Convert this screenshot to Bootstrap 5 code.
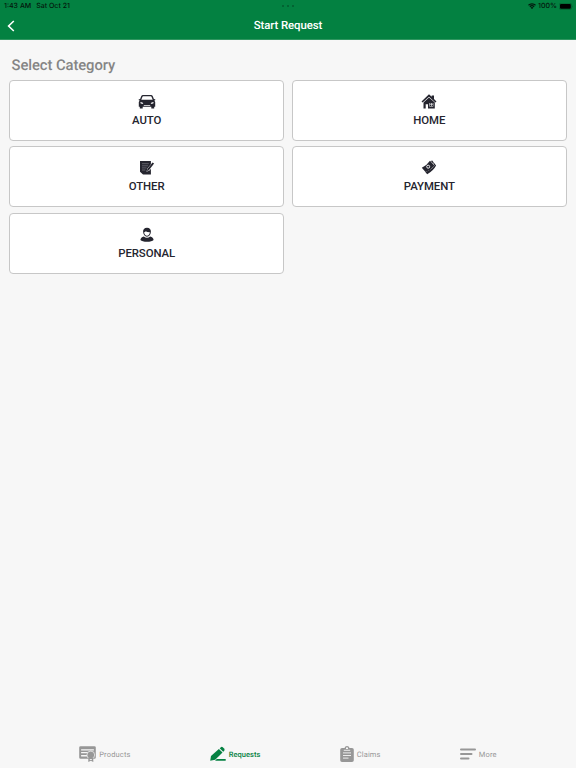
<!DOCTYPE html>
<html lang="en">

<head>
    <meta charset="utf-8" />
    <meta name="viewport" content="width=device-width, initial-scale=1" />
    <title>Start Request</title>

    <link rel="stylesheet" href="https://cdn.jsdelivr.net/npm/bootstrap@5.3.2/dist/css/bootstrap.min.css">
    <style>
        body {
            background-color: #f7f7f7;
            font-family: Roboto, sans-serif;
            color: #25252f;
            text-rendering: geometricPrecision;
        }

        .app-header {
            height: 40px;
            background-color: #038141;
            border-bottom: 1px solid #2f9660;
        }

        .status-bar {
            height: 12px;
            padding: 0 3px 0 4px;
            font: 500 7px/12px Inter, sans-serif;
            color: #04150c;
        }

        .status-bar > div {
            flex: 1;
        }

        .clock {
            gap: 5px;
        }

        .battery {
            gap: 2px;
        }

        .dots {
            padding-right: 2px;
            color: #035a2e;
            gap: 3px;
        }

        .dots i {
            width: 2px;
            height: 2px;
            border-radius: 50%;
            background-color: currentColor;
        }

        .title-bar {
            height: 27px;
            padding: 0 7px;
        }

        .title-bar > * {
            flex: 1;
        }

        .title-bar h1 {
            font-size: 11.4px;
            line-height: 25px;
            font-weight: 500;
            letter-spacing: -.08px;
        }

        .section-title {
            margin: 16px 0 6px 2.3px;
            font-size: 14.8px;
            line-height: 18px;
            font-weight: 500;
            letter-spacing: -.08px;
            color: #858585;
        }

        main {
            padding: 0 9.3px;
        }

        .categories {
            --bs-gutter-x: 8px;
            --bs-gutter-y: 5.4px;
        }

        .category-btn {
            height: 61px;
            padding: 12px 0 0;
            border: 1px solid #c7c7c7;
            border-radius: 4px;
            background-color: #fff;
            color: #25252f;
            font-size: 11.4px;
            font-weight: 500;
            line-height: 14px;
            letter-spacing: -.08px;
        }

        .category-btn svg {
            margin-bottom: 1.8px;
        }

        .tab-bar {
            height: 28px;
        }

        .tab-bar a {
            gap: 3px;
            color: #979797;
            font-size: 7.5px;
            line-height: 10px;
            letter-spacing: .15px;
        }

        .tab-bar a span {
            padding-top: 1px;
        }

        .tab-bar a.active {
            color: #058142;
            font-weight: 500;
            letter-spacing: .03px;
        }
    </style>
</head>

<body class="d-flex flex-column vh-100 overflow-hidden">
    <header class="app-header flex-shrink-0">
        <div class="status-bar d-flex align-items-center">
            <div class="clock d-flex"><span>1:43 AM</span><span>Sat Oct 21</span></div>
            <div class="dots d-flex justify-content-center"><i></i><i></i><i></i></div>
            <div class="battery d-flex justify-content-end align-items-center">
                <svg width="8" height="6" viewBox="0 0 16 12" fill="none" stroke="currentColor" stroke-width="2.4">
                    <path d="M1 4.5a10 10 0 0 1 14 0M3.7 7.4a6.2 6.2 0 0 1 8.6 0" />
                    <path d="M8 12 5.3 9.4a4 4 0 0 1 5.4 0z" fill="currentColor" stroke="none" />
                </svg>
                <span>100%</span>
                <svg width="14" height="7" viewBox="0 0 14 7">
                    <rect x=".3" y=".3" width="12.2" height="6.2" rx="1.6" fill="none" stroke="#035a2e" stroke-width=".6" />
                    <rect x="1" y="1" width="10.8" height="4.8" rx="1" fill="#000" />
                    <path d="M13.1 2.4q1 1 0 2z" fill="#035a2e" />
                </svg>
            </div>
        </div>
        <div class="title-bar d-flex align-items-center text-white">
            <a href="#" class="text-white d-flex" aria-label="Back">
                <svg width="8" height="12" viewBox="0 0 8 12" fill="none" stroke="currentColor" stroke-width="1.6">
                    <path d="M6.8 1 1.6 6l5.2 5" />
                </svg>
            </a>
            <h1 class="m-0 text-center">Start Request</h1>
            <span></span>
        </div>
    </header>

    <main class="flex-grow-1">
        <h2 class="section-title">Select Category</h2>
        <div class="row row-cols-2 categories">
            <div class="col">
                <button class="category-btn w-100 d-flex flex-column align-items-center">
                    <svg width="18" height="18" viewBox="0 0 18 18" fill="currentColor">
                        <path fill-rule="evenodd" d="M5 2h8q1.200 0 1.700 1.100L16 6.200l1.200-.3v1.300l-.9.3.9 1.500v4.800h-1v1.700h-2.900v-1.700H4.700v1.700H1.800v-1.700h-1V9l.9-1.500-.9-.3V5.900l1.200.3 1.300-3.100Q3.800 2 5 2zM5.200 3.300q-.5 0-.7.5L3.300 6.800h11.400l-1.200-3q-.2-.5-.7-.5zM2.400 9.100l.3 1.500 2.600.5-.8-1.500zM15.600 9.100l-.3 1.500-2.600.5.8-1.500zM5.800 12.200v.7h6.400v-.7z" />
                    </svg>
                    AUTO
                </button>
            </div>
            <div class="col">
                <button class="category-btn w-100 d-flex flex-column align-items-center">
                    <svg width="18" height="18" viewBox="0 0 18 18" fill="currentColor">
                        <path d="M1.500 8.500 9 1.300l2.700 2.500V2.400H14v3.700l2.500 2.400-1.100 1.100L9 3.700 2.600 9.600z" />
                        <path fill-rule="evenodd" d="M3.500 9.600 9 4.500l5.800 5.100v5.900H8v-4.300H5.700v4.300H3.500zM9.300 9.900v3.600h4V9.900z" />
                        <path d="M9.700 10.200H11v1.300H9.700zM11.600 10.200h1.300v1.300h-1.300zM9.700 11.900H11v1.200H9.700zM11.600 11.900h1.300v1.200h-1.300z" />
                    </svg>
                    HOME
                </button>
            </div>
            <div class="col">
                <button class="category-btn w-100 d-flex flex-column align-items-center">
                    <svg width="18" height="18" viewBox="0 0 18 18" fill="currentColor">
                        <path d="M2 2h10.900v3.200L9.400 9.600l-.9 3.200 3-1.300 1.400-1.800v5.800H5l-3-2.800z" />
                        <path d="M4 4.700h6.800M4 6.800h6M4 8.900h4.600M4 11h3.400" stroke="#8a8a92" stroke-width=".6" />
                        <path d="m14.500 3.400 1.600 1.200-5.200 6.600-1.900 1.100.4-2.200z" />
                    </svg>
                    OTHER
                </button>
            </div>
            <div class="col">
                <button class="category-btn w-100 d-flex flex-column align-items-center">
                    <svg width="18" height="18" viewBox="0 0 18 18" fill="currentColor">
                        <path d="M1.800 8.700Q6.700 6.500 10 1.700l4.400 5Q10.600 11.300 5.500 13.100z" />
                        <path d="m10.900 2.100 1.300-.7 3.900 5.200q-2.700 5.300-8.900 8.700l-1.900-2.200q6.300-2.300 9.300-6.600z" />
                        <circle cx="8.200" cy="7.700" r="1.500" fill="none" stroke="#fff" stroke-width=".9" />
                        <path d="m13 4.500.9-.7" stroke="#fff" stroke-width=".6" />
                    </svg>
                    PAYMENT
                </button>
            </div>
            <div class="col">
                <button class="category-btn w-100 d-flex flex-column align-items-center">
                    <svg width="18" height="18" viewBox="0 0 18 18" fill="currentColor">
                        <path fill-rule="evenodd" d="M9 1.800c2.700 0 4.100 1.700 3.900 4-.2 2.900-1.700 4.900-3.900 4.900S5.300 8.700 5.100 5.800C4.900 3.500 6.300 1.800 9 1.800zM6.100 6.300C6.400 8.600 7.500 9.800 9 9.800s2.600-1.200 2.900-3.500Q9 6.200 7.700 5.300 7.200 6.200 6.100 6.300z" />
                        <path d="M5.800 10.400Q9 13.200 12.200 10.400q3.100.7 3.400 3.500-1.700 1.800-6.600 1.800t-6.600-1.800q.3-2.800 3.400-3.500z" />
                    </svg>
                    PERSONAL
                </button>
            </div>
        </div>
    </main>

    <nav class="tab-bar d-flex justify-content-evenly align-items-center flex-shrink-0">
        <a href="#" class="d-flex align-items-center text-decoration-none">
            <svg width="17" height="16" viewBox="0 0 17 16" fill="currentColor">
                <path fill-rule="evenodd" d="M1.600.2h13.800q1.400 0 1.400 1.400v9.900q0 1.300-1.400 1.300H1.600Q.2 12.800.2 11.500V1.600Q.2.2 1.600.2zM2.100 3.300v1.200h12.800V3.300zM2.100 6.100v1.200h6.500l1-1.200zM2.100 9v1.500h6V9z" />
                <circle cx="11.800" cy="9" r="3.900" stroke="#f7f7f7" stroke-width=".7" />
                <path d="M9.300 11.700h5V16l-2.500-1.300L9.300 16z" />
                <path d="M10.800 13.100v1.100l1-.5 1 .5v-1.100z" fill="#f7f7f7" />
            </svg>
            <span>Products</span>
        </a>
        <a href="#" class="active d-flex align-items-center text-decoration-none">
            <svg width="16" height="16" viewBox="0 0 16 16" fill="currentColor">
                <path d="m8.900 3.100 3.600 3.500-7.300 7.100-5 1.100.8-4.700z" />
                <path d="m9.700 2.300.9-.9q1.300-1.100 2.400 0l1.100 1.100q1.100 1.200 0 2.400l-.9.9z" />
                <path d="M6.800 13.100h8.900v1.700H5.100z" />
            </svg>
            <span>Requests</span>
        </a>
        <a href="#" class="d-flex align-items-center text-decoration-none">
            <svg width="14" height="16" viewBox="0 0 14 16" fill="currentColor">
                <path fill-rule="evenodd" d="M2 2h2.500Q5 0 7 0t2.500 2H12q1.800 0 1.800 1.800v10.400Q13.800 16 12 16H2Q.2 16 .2 14.200V3.800Q.2 2 2 2zM7 1.200a1 1 0 0 0-1 1V3h2v-.8a1 1 0 0 0-1-1z" />
                <path d="M3.800 4.300h6.400M3 6.900h8M3 9.500h8M3 12.100h5.500" stroke="#f7f7f7" stroke-width=".9" />
            </svg>
            <span>Claims</span>
        </a>
        <a href="#" class="d-flex align-items-center text-decoration-none">
            <svg width="16" height="14" viewBox="0 0 16 14" fill="none" stroke="currentColor" stroke-width="2" stroke-linecap="round">
                <path d="M1 2.500h14M1 7h10.500M1 11.600h7.500" />
            </svg>
            <span>More</span>
        </a>
    </nav>

    <script src="https://cdn.jsdelivr.net/npm/bootstrap@5.3.2/dist/js/bootstrap.bundle.min.js"></script>
</body>

</html>
